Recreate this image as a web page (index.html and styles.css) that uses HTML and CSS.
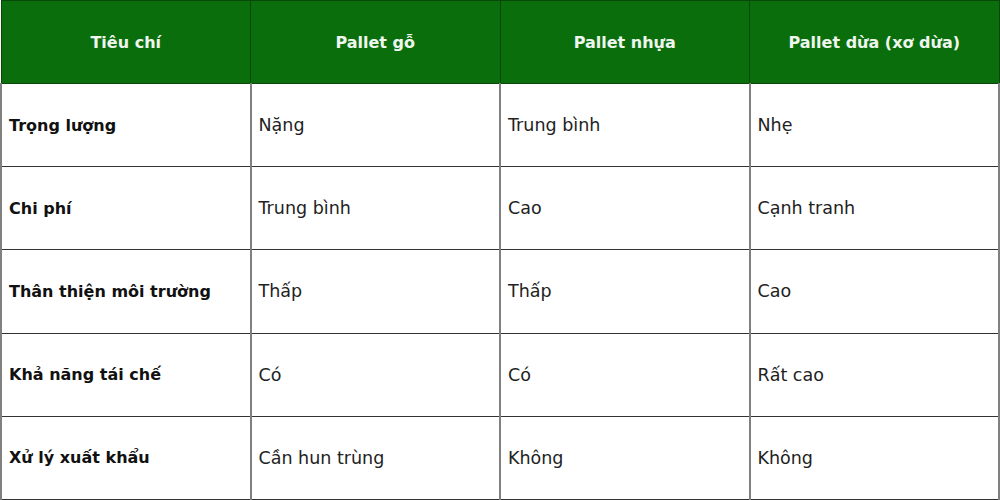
FILE: index.html
```html
<!DOCTYPE html>
<html lang="vi">
<head>
<meta charset="utf-8">
<link rel="stylesheet" href="styles.css">
</head>
<body>
<table class="cmp">
  <thead>
    <tr>
      <th>Tiêu chí</th>
      <th>Pallet gỗ</th>
      <th>Pallet nhựa</th>
      <th>Pallet dừa (xơ dừa)</th>
    </tr>
  </thead>
  <tbody>
    <tr><td class="crit">Trọng lượng</td><td>Nặng</td><td>Trung bình</td><td>Nhẹ</td></tr>
    <tr><td class="crit">Chi phí</td><td>Trung bình</td><td>Cao</td><td>Cạnh tranh</td></tr>
    <tr><td class="crit">Thân thiện môi trường</td><td>Thấp</td><td>Thấp</td><td>Cao</td></tr>
    <tr><td class="crit">Khả năng tái chế</td><td>Có</td><td>Có</td><td>Rất cao</td></tr>
    <tr><td class="crit">Xử lý xuất khẩu</td><td>Cần hun trùng</td><td>Không</td><td>Không</td></tr>
  </tbody>
</table>
</body>
</html>
```
FILE: styles.css
```css
html, body {
  margin: 0;
  padding: 0;
  background: #ffffff;
}
.cmp {
  width: 1000px;
  height: 500px;
  border-collapse: collapse;
  table-layout: fixed;
  font-family: "DejaVu Sans", "Noto Sans", sans-serif;
}
.cmp th {
  background: #0b6e0c;
  color: #eef6ee;
  font-weight: bold;
  font-size: 16px;
  text-align: center;
  height: 82px;
  border: 1px solid #0a470b;
  padding: 0;
}
.cmp td {
  height: 82px;
  padding: 0 0 0 7px;
  font-size: 17.5px;
  color: #222222;
  border-top: 1px solid #333333;
  border-bottom: 1px solid #333333;
  border-left: 2px solid #808080;
  border-right: 2px solid #808080;
  vertical-align: middle;
}
.cmp td.crit {
  font-weight: bold;
  font-size: 16px;
  color: #111111;
}
```
